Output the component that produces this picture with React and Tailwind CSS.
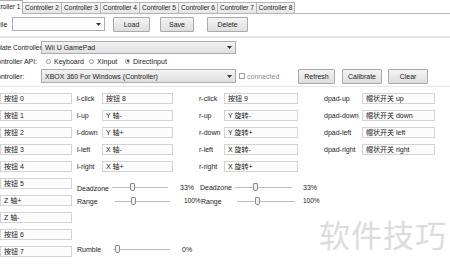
import React from "react";

const Tab = ({ label, active, cls }) =>
  active ? (
    <div className={`h-[14px] border border-b-0 border-[#adadad] bg-white flex items-center justify-center relative z-10 text-[6.6px] ${cls}`}>
      {label}
    </div>
  ) : (
    <div className={`h-[12px] mt-[2px] border border-l-0 border-[#b5b5b5] bg-gradient-to-b from-[#f6f6f6] to-[#e6e6e6] flex items-center justify-center text-[6.6px] ${cls}`}>
      {label}
    </div>
  );

const Btn = ({ children, cls }) => (
  <div className={`h-[15px] border border-[#a9a9a9] rounded-[1px] bg-gradient-to-b from-[#f4f4f4] to-[#dedede] flex items-center justify-center text-[#222] ${cls}`}>
    {children}
  </div>
);

const Arrow = () => (
  <svg width="5" height="3" viewBox="0 0 5 3" className="shrink-0">
    <path d="M0 0 L5 0 L2.5 3 Z" fill="#333" />
  </svg>
);

const TBox = ({ children, cls }) => (
  <div className={`h-[11px] border border-[#d4d4d4] bg-[#fcfcfc] pl-[3px] flex items-center text-[#222] whitespace-nowrap ${cls}`}>
    {children}
  </div>
);

const Radio = ({ on, label, cls }) => (
  <div className={`flex items-center ${cls}`}>
    <div className="w-[5px] h-[5px] rounded-full border border-[#9a9a9a] bg-white flex items-center justify-center">
      {on && <div className="w-[2px] h-[2px] rounded-full bg-[#333]" />}
    </div>
    <span className="ml-[3px]">{label}</span>
  </div>
);

const Slider = ({ track, thumb }) => (
  <div className={`relative h-[12px] flex items-center ${track}`}>
    <div className="w-full h-[1px] bg-[#bdbdbd]" />
    <div className={`absolute top-[2px] w-[5px] h-[8px] rounded-b-[2px] rounded-t-[1px] border border-[#8c8c8c] bg-[#f2f2f2] ${thumb}`} />
  </div>
);

export default function App() {
  const col1 = ["按钮 0", "按钮 1", "按钮 2", "按钮 3", "按钮 4", "按钮 5", "Z 轴+", "Z 轴-", "按钮 6", "按钮 7"];
  const col2 = [
    ["l-click", "按钮 8"],
    ["l-up", "Y 轴-"],
    ["l-down", "Y 轴+"],
    ["l-left", "X 轴-"],
    ["l-right", "X 轴+"],
  ];
  const col3 = [
    ["r-click", "按钮 9"],
    ["r-up", "Y 旋转-"],
    ["r-down", "Y 旋转+"],
    ["r-left", "X 旋转-"],
    ["r-right", "X 旋转+"],
  ];
  const col4 = [
    ["dpad-up", "帽状开关 up"],
    ["dpad-down", "帽状开关 down"],
    ["dpad-left", "帽状开关 left"],
    ["dpad-right", "帽状开关 right"],
  ];

  return (
    <div className="relative w-[450px] h-[271px] overflow-hidden bg-white text-[7px] leading-none text-[#222] font-['Liberation_Sans','Noto_Sans_CJK_SC',sans-serif]">
      {/* tab strip */}
      <div className="flex h-[14px] ml-[-16px] whitespace-nowrap">
        <Tab active label="Controller 1" cls="w-[39px]" />
        <Tab label="Controller 2" cls="w-[39px]" />
        <Tab label="Controller 3" cls="w-[39px]" />
        <Tab label="Controller 4" cls="w-[39px]" />
        <Tab label="Controller 5" cls="w-[39px]" />
        <Tab label="Controller 6" cls="w-[39px]" />
        <Tab label="Controller 7" cls="w-[39px]" />
        <Tab label="Controller 8" cls="w-[38px]" />
      </div>
      <div className="h-px bg-[#b8b8b8] mt-[-1px]" />

      {/* row 1 */}
      <div className="flex items-center h-[14px] mt-[3px]">
        <div className="w-[12px] overflow-hidden whitespace-nowrap">
          <span className="ml-[-4px] inline-block">File</span>
        </div>
        <div className="w-[93px] h-[14px] border border-[#abadb3] bg-white flex items-center justify-end pr-[3px]">
          <Arrow />
        </div>
        <Btn cls="ml-[8px] w-[37px]">Load</Btn>
        <Btn cls="ml-[10px] w-[34px]">Save</Btn>
        <Btn cls="ml-[13px] w-[41px]">Delete</Btn>
      </div>

      <div className="h-[2px] bg-[#e4e4e4] mt-[5px]" />

      {/* row 2 */}
      <div className="flex items-center h-[13px] mt-[3px]">
        <div className="w-[41px] overflow-hidden whitespace-nowrap">
          <span className="ml-[-13px] inline-block text-[6.6px]">Emulate Controller</span>
        </div>
        <div className="w-[195px] h-[13px] border border-[#acacac] bg-gradient-to-b from-[#f3f3f3] to-[#e0e0e0] flex items-center justify-between pl-[3px] pr-[3px]">
          <span>Wii U GamePad</span>
          <Arrow />
        </div>
      </div>

      {/* row 3 */}
      <div className="flex items-center h-[12px] mt-[1px]">
        <div className="w-[46px] overflow-hidden whitespace-nowrap">
          <span className="ml-[-8px] inline-block">Controller API:</span>
        </div>
        <Radio label="Keyboard" cls="w-[43px]" />
        <Radio label="XInput" cls="w-[36px]" />
        <Radio on label="DirectInput" />
      </div>

      {/* row 4 */}
      <div className="flex items-center h-[16px] mt-[1px]">
        <div className="w-[41px] overflow-hidden whitespace-nowrap">
          <span className="ml-[-8px] inline-block">Controller:</span>
        </div>
        <div className="w-[195px] h-[14px] border border-[#acacac] bg-gradient-to-b from-[#f3f3f3] to-[#e0e0e0] flex items-center justify-between pl-[3px] pr-[3px]">
          <span>XBOX 360 For Windows (Controller)</span>
          <Arrow />
        </div>
        <div className="ml-[3px] w-[6px] h-[6px] border border-[#a0a0a0] bg-white" />
        <span className="ml-[2px] text-[#8a8a8a] w-[51px]">connected</span>
        <Btn cls="w-[37px]">Refresh</Btn>
        <Btn cls="ml-[7px] w-[40px]">Calibrate</Btn>
        <Btn cls="ml-[6px] w-[40px]">Clear</Btn>
      </div>

      <div className="h-px bg-[#e6e6e6] mt-[2px]" />

      {/* mapping area */}
      <div className="flex mt-[6px]">
        <div className="flex flex-col w-[72px]">
          {col1.map((t) => (
            <div key={t} className="h-[17px]">
              <TBox cls="w-[72px]">{t}</TBox>
            </div>
          ))}
        </div>

        <div className="flex flex-col ml-[5px]">
          <div className="flex">
            <div className="flex flex-col">
              {col2.map(([l, v]) => (
                <div key={l} className="h-[17px] flex items-start">
                  <div className="w-[25px] h-[11px] flex items-center">{l}</div>
                  <TBox cls="w-[71px]">{v}</TBox>
                </div>
              ))}
            </div>
            <div className="flex flex-col ml-[26px]">
              {col3.map(([l, v]) => (
                <div key={l} className="h-[17px] flex items-start">
                  <div className="w-[25px] h-[11px] flex items-center">{l}</div>
                  <TBox cls="w-[74px]">{v}</TBox>
                </div>
              ))}
            </div>
            <div className="flex flex-col ml-[26px]">
              {col4.map(([l, v]) => (
                <div key={l} className="h-[17px] flex items-start">
                  <div className="w-[38px] h-[11px] flex items-center">{l}</div>
                  <TBox cls="w-[73px]">{v}</TBox>
                </div>
              ))}
            </div>
          </div>

          {/* sliders */}
          <div className="flex items-center h-[12px] mt-[3px]">
            <span className="w-[35px] pt-[3px]">Deadzone</span>
            <Slider track="w-[56px]" thumb="left-[18px]" />
            <span className="ml-[12px] w-[20px]">33%</span>
            <span className="w-[35px] pt-[1px]">Deadzone</span>
            <Slider track="w-[57px]" thumb="left-[18px]" />
            <span className="ml-[11px]">33%</span>
          </div>
          <div className="flex items-center h-[12px] mt-[2px]">
            <span className="w-[38px]">Range</span>
            <Slider track="w-[55px]" thumb="left-[16px]" />
            <span className="ml-[14px] w-[17px] text-[6.5px]">100%</span>
            <span className="w-[36px]">Range</span>
            <Slider track="w-[58px]" thumb="left-[18px]" />
            <span className="ml-[8px] text-[6.5px]">100%</span>
          </div>
          <div className="flex items-center h-[12px] mt-[36px]">
            <span className="w-[36px]">Rumble</span>
            <Slider track="w-[57px]" thumb="left-[2px]" />
            <span className="ml-[12px]">0%</span>
          </div>
        </div>
      </div>

      {/* watermark */}
      <div className="absolute left-[319px] top-[218px] text-[31px] leading-none tracking-[1px] text-[#dcdcdc] font-['Noto_Sans_CJK_SC',sans-serif] whitespace-nowrap pointer-events-none">
        软件技巧
      </div>
    </div>
  );
}
